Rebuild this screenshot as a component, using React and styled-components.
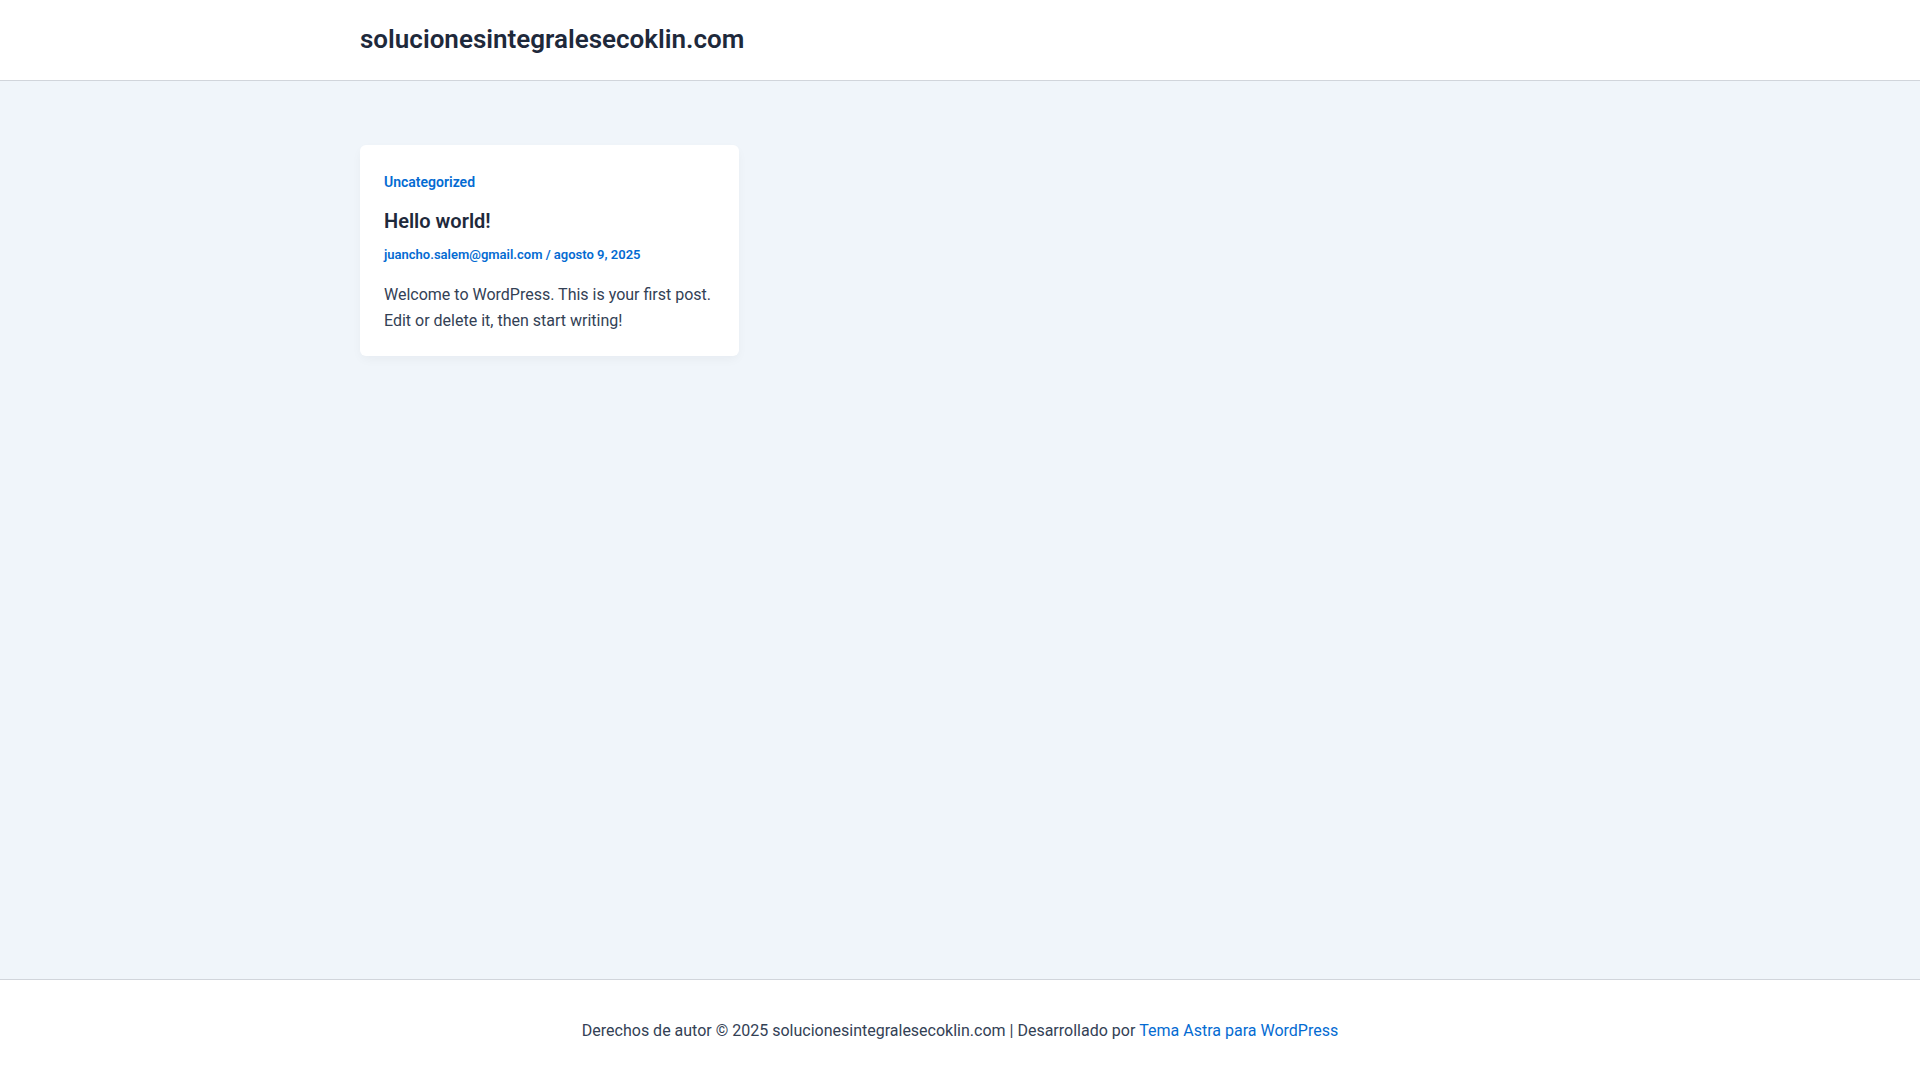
import React from "react";
import styled, { createGlobalStyle } from "styled-components";

const GlobalStyle = createGlobalStyle`
    * {
        box-sizing: border-box;
    }
    body {
        margin: 0;
        font-family: Roboto, "Liberation Sans", sans-serif;
        color: #334155;
        background: #f0f5fa;
    }
    a {
        color: #046bd2;
        text-decoration: none;
    }
`

const posts = [
    {
        id: 1,
        category: "Uncategorized",
        title: "Hello world!",
        author: "juancho.salem@gmail.com",
        date: "agosto 9, 2025",
        excerpt: "Welcome to WordPress. This is your first post. Edit or delete it, then start writing!",
    },
];

function App() {
    return (
        <Page>
            <GlobalStyle />
            <Header>
                <Container>
                    <SiteTitle href="#">solucionesintegralesecoklin.com</SiteTitle>
                </Container>
            </Header>

            <Main>
                <Container>
                    <PostGrid>
                        {posts.map((post) => (
                            <Card key={post.id}>
                                <Category href="#">{post.category}</Category>
                                <PostTitle>
                                    <a href="#">{post.title}</a>
                                </PostTitle>
                                <Meta>
                                    <a href="#">{post.author}</a> / <a href="#">{post.date}</a>
                                </Meta>
                                <Excerpt>{post.excerpt}</Excerpt>
                            </Card>
                        ))}
                    </PostGrid>
                </Container>
            </Main>

            <Footer>
                Derechos de autor © 2025 solucionesintegralesecoklin.com | Desarrollado por{" "}
                <a href="#">Tema Astra para WordPress</a>
            </Footer>
        </Page>
    )
}

const Page = styled.div`
    min-height: 100vh;
    display: flex;
    flex-direction: column;
`

const Container = styled.div`
    width: 1200px;
    margin: 0 auto;
`

const Header = styled.header`
    height: 81px;
    background: #fff;
    border-bottom: 1px solid #d1d5db;
    display: flex;
    align-items: center;
`

const SiteTitle = styled.a`
    && {
        color: #1e293b;
    }
    font-size: 26px;
    font-weight: 600;
    line-height: 1.2;
    display: inline-block;
`

const Main = styled.main`
    flex: 1;
    padding-top: 64px;
`

const PostGrid = styled.div`
    display: grid;
    grid-template-columns: repeat(3, 1fr);
    gap: 32px;
`

const Card = styled.article`
    background: #fff;
    border-radius: 6px;
    padding: 24px 24px 21px;
    box-shadow: 0 4px 12px -2px rgba(15, 23, 42, 0.05);
`

const Category = styled.a`
    display: block;
    font-size: 14px;
    font-weight: 600;
    line-height: 1.4;
    margin-top: 4px;
`

const PostTitle = styled.h2`
    margin: 15px 0 0;
    font-size: 20px;
    font-weight: 600;
    line-height: 1.3;

    a {
        color: #1e293b;
    }
`

const Meta = styled.div`
    margin-top: 12px;
    font-size: 13px;
    font-weight: 600;
    line-height: 1.4;
    color: #046bd2;
`

const Excerpt = styled.p`
    margin: 18px 0 0;
    font-size: 16px;
    line-height: 1.65;
`

const Footer = styled.footer`
    height: 101px;
    background: #fff;
    border-top: 1px solid #d1d5db;
    display: flex;
    align-items: center;
    justify-content: center;
    font-size: 16px;
    color: #334155;
    white-space: pre;
`

export default App
